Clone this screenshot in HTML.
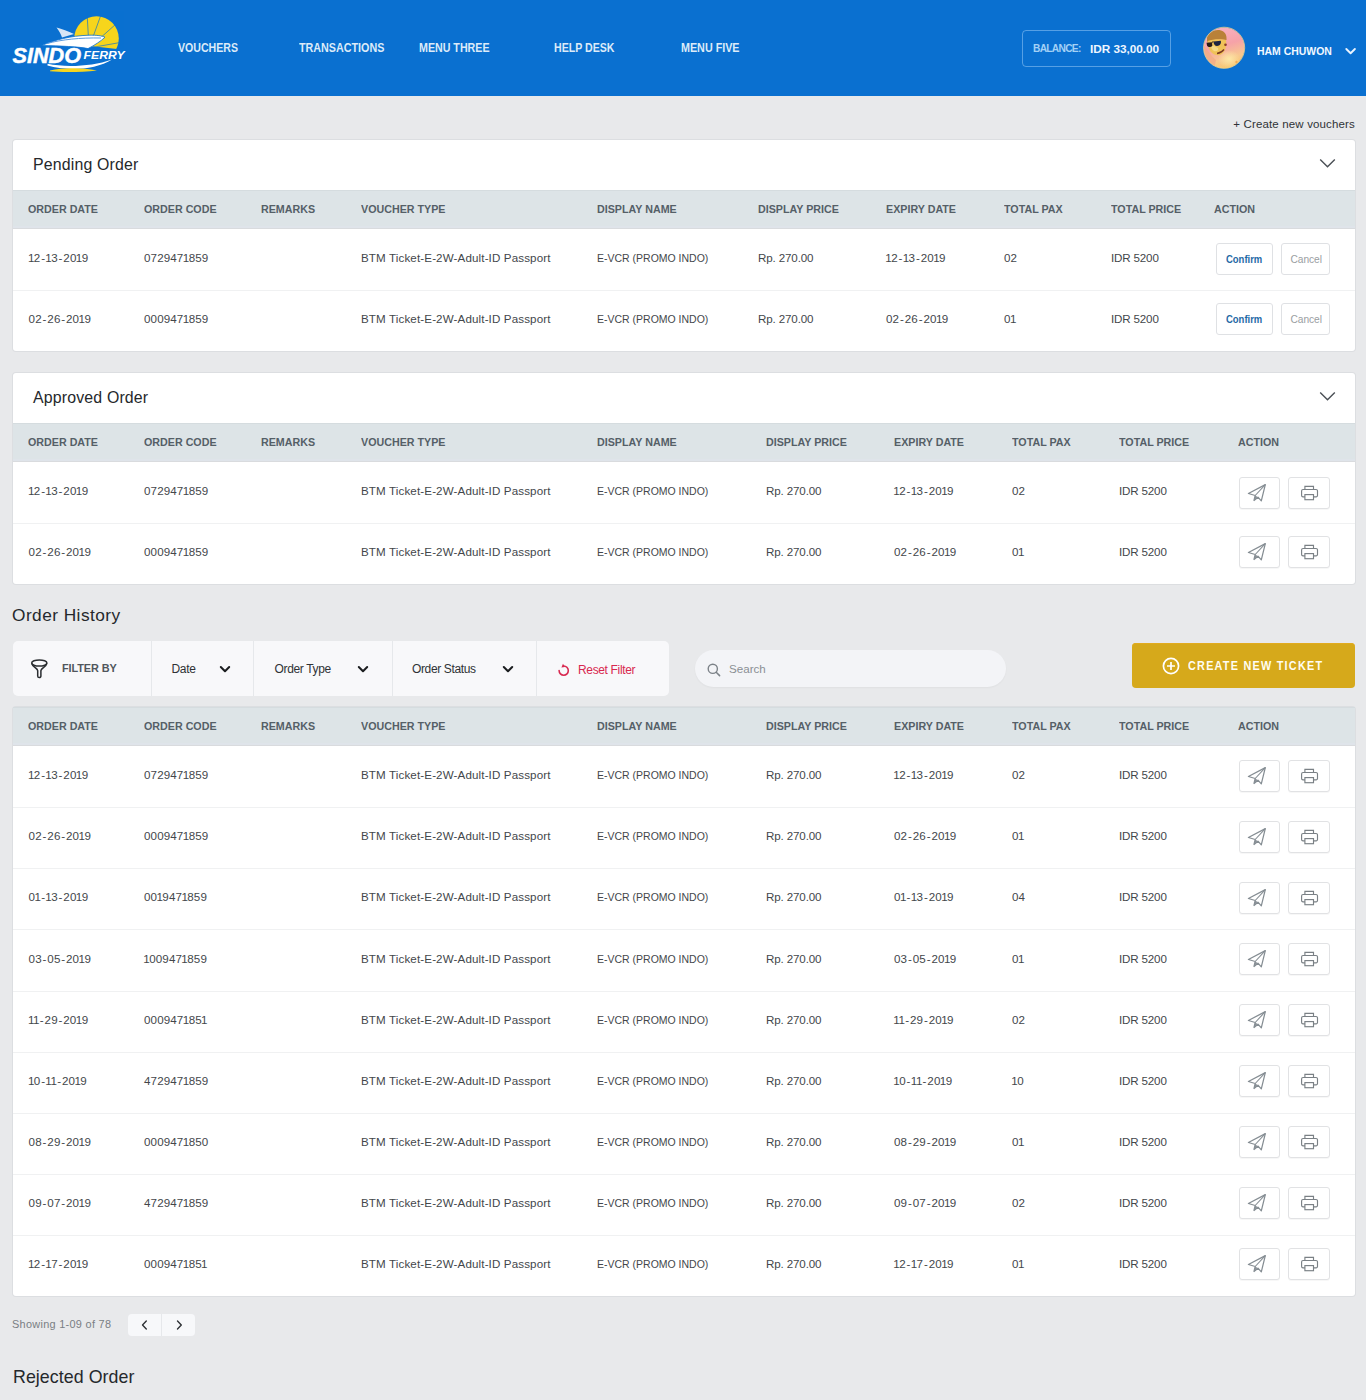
<!DOCTYPE html>
<html><head><meta charset="utf-8"><title>Sindo Ferry - Vouchers</title>
<style>
html,body{margin:0;padding:0}
body{width:1366px;height:1400px;position:relative;overflow:hidden;background:#e8e9eb;font-family:"Liberation Sans",sans-serif}
.t{position:absolute;white-space:nowrap}
.b{position:absolute;display:block}
</style></head><body>
<div class="b" style="left:0px;top:0px;width:1366px;height:96px;background:#0a70d0"></div>
<svg class="b" style="left:0px;top:0px" width="140" height="80" viewBox="0 0 140 80">
  <defs><clipPath id="sunclip"><path d="M60 10 H130 V50.5 L95 46.5 L60 44 Z"/></clipPath></defs>
  <g clip-path="url(#sunclip)">
    <circle cx="96.5" cy="38.5" r="22.3" fill="#f7d51d"/>
    <g stroke="#0a70d0" stroke-width="0.9" opacity="0.75">
      <line x1="89" y1="48" x2="87" y2="12"/><line x1="89" y1="48" x2="102" y2="12"/>
      <line x1="89" y1="48" x2="116" y2="24"/><line x1="89" y1="48" x2="123" y2="42"/>
    </g>
  </g>
  <path d="M56.5 27.5 C62 29 68 31 74 34 L62 37.5 C61 34 59 31 56.5 27.5 Z" fill="#d6e5f6"/>
  <path d="M41.5 45.6 C55 40 70 35.8 89 35.2 C97 35 102 35.8 105 37.2 C101 41 95 45 88 48.6 C80 46.8 60 45.8 41.5 45.6 Z" fill="#ffffff" stroke="#0a70d0" stroke-width="0.8"/>
  <path d="M47 43.5 C62 39.5 80 37.6 101 38" stroke="#5b9be0" stroke-width="1" fill="none"/>
  <text x="12.5" y="63.2" font-family="Liberation Sans" font-weight="700" font-style="italic" font-size="22.5" fill="#fff" stroke="#fff" stroke-width="0.5" textLength="68.5" lengthAdjust="spacingAndGlyphs">SINDO</text>
  <text x="83.6" y="59.2" font-family="Liberation Sans" font-weight="700" font-style="italic" font-size="10.6" fill="#fff" textLength="41" lengthAdjust="spacingAndGlyphs">FERRY</text>
  <path d="M47.5 63.8 C66 67.5 92 66.5 112 59.4 C96 69.5 68 71.5 47.5 65.6 Z" fill="#fff"/>
  <path d="M50 70.4 C62 67.6 82 67.4 97 70.4 C82 72.2 62 72.4 50 71.2 Z" fill="#f7d51d"/>
</svg>
<div class="t" style="left:178.2px;top:43.00px;font-size:11.9px;line-height:11.9px;font-weight:700;color:#dcebf9;letter-spacing:0px;transform:scaleX(0.89);transform-origin:0 0;">VOUCHERS</div>
<div class="t" style="left:298.7px;top:43.00px;font-size:11.9px;line-height:11.9px;font-weight:700;color:#dcebf9;letter-spacing:0px;transform:scaleX(0.904);transform-origin:0 0;">TRANSACTIONS</div>
<div class="t" style="left:419.3px;top:43.00px;font-size:11.9px;line-height:11.9px;font-weight:700;color:#dcebf9;letter-spacing:0px;transform:scaleX(0.897);transform-origin:0 0;">MENU THREE</div>
<div class="t" style="left:553.7px;top:43.00px;font-size:11.9px;line-height:11.9px;font-weight:700;color:#dcebf9;letter-spacing:0px;transform:scaleX(0.892);transform-origin:0 0;">HELP DESK</div>
<div class="t" style="left:681.1px;top:43.00px;font-size:11.9px;line-height:11.9px;font-weight:700;color:#dcebf9;letter-spacing:0px;transform:scaleX(0.904);transform-origin:0 0;">MENU FIVE</div>
<div class="b" style="left:1022px;top:30px;width:149px;height:37px;box-sizing:border-box;border:1px solid rgba(150,200,245,0.55);border-radius:4px"></div>
<div class="t" style="left:1033px;top:44.00px;font-size:10.2px;line-height:10.2px;font-weight:700;color:#a3d1f6;letter-spacing:-0.7px;">BALANCE:</div>
<div class="t" style="left:1090px;top:44.00px;font-size:11.8px;line-height:11.8px;font-weight:700;color:#eef6ff;letter-spacing:-0.05px;">IDR 33,00.00</div>
<svg class="b" style="left:1202px;top:26px" width="44" height="44" viewBox="0 0 44 44">
  <defs>
   <clipPath id="avc"><circle cx="22.1" cy="21.8" r="20.4"/></clipPath>
   <linearGradient id="avbg" x1="0.3" y1="0" x2="0.6" y2="1">
     <stop offset="0" stop-color="#f7b2c4"/><stop offset="0.45" stop-color="#f6a2a8"/><stop offset="0.75" stop-color="#f8c890"/><stop offset="1" stop-color="#f7c766"/>
   </linearGradient>
   <radialGradient id="avlight" cx="0.5" cy="0.5" r="0.5"><stop offset="0" stop-color="#fde7a6"/><stop offset="1" stop-color="#fde7a6" stop-opacity="0"/></radialGradient>
  </defs>
  <g clip-path="url(#avc)">
    <rect x="0" y="0" width="44" height="44" fill="url(#avbg)"/>
    <path d="M0 18 C5 22 8 30 14 34 L12 44 L0 44 Z" fill="#f2ab86" opacity="0.8"/>
    <ellipse cx="27" cy="33" rx="11" ry="9" fill="url(#avlight)"/>
    <path d="M5 12 C6 6 13 3 19 4.5 C23 5.5 25 9 24.5 14 C20 13 12 13 5 16 Z" fill="#b98138"/>
    <path d="M5.5 15 C11 13 19 12.5 24 14 C25 20 23 27 18 29 C13 30 9 27 7 23 C6 20 5.5 17 5.5 15 Z" fill="#f0c258"/>
    <path d="M9 19.5 C12 19 14 21 16 22 C17 24 15 26 12 25 C10 24 9 22 9 19.5 Z" fill="#f9e39a" opacity="0.7"/>
    <path d="M4.5 16.8 L10 16.2 L10.3 20 C9 21.5 6 21.5 5 19.5 Z" fill="#2b1c1a"/>
    <path d="M11.5 15.5 L18.8 14.8 C19.5 17.5 18 19.8 15 20 C13 20 11.5 18 11.5 15.5 Z" fill="#1f2440"/>
    <path d="M10 16.2 L11.5 15.8" stroke="#2b1c1a" stroke-width="1"/>
    <circle cx="23.5" cy="18.8" r="1.3" fill="#8a3b2a"/>
    <path d="M15 27.5 C18 27 20.5 25.5 22 23.5" stroke="#7a3a22" stroke-width="1.3" fill="none"/>
    <circle cx="34.5" cy="36" r="1.2" fill="#f39a3a" opacity="0.7"/>
  </g>
  <circle cx="22.1" cy="21.8" r="20.6" fill="none" stroke="#f6d88a" stroke-width="0.9" opacity="0.8"/>
</svg>
<div class="t" style="left:1257px;top:46.00px;font-size:11.45px;line-height:11.45px;font-weight:700;color:#f2f8ff;letter-spacing:0px;transform:scaleX(0.914);transform-origin:0 0;">HAM CHUWON</div>
<svg class="b" style="left:1344px;top:46px" width="13" height="10" viewBox="0 0 13 10"><path d="M2.3 3 L6.6 7.2 L10.9 3" stroke="#eaf4ff" stroke-width="1.9" fill="none" stroke-linecap="round" stroke-linejoin="round"/></svg>
<div class="t" style="right:11px;top:119.00px;font-size:11.5px;line-height:11.5px;font-weight:400;color:#2f3337;letter-spacing:0.15px;">+ Create new vouchers</div>
<div class="b" style="left:13px;top:140px;width:1342px;height:211px;background:#fff;border-radius:3px;box-shadow:0 0 0 1px #dcdee1"></div>
<div class="t" style="left:33px;top:157.00px;font-size:15.9px;line-height:15.9px;font-weight:400;color:#25282b;letter-spacing:0.16px;">Pending Order</div>
<svg class="b" style="left:1319px;top:158px" width="17" height="11" viewBox="0 0 17 11"><path d="M1.2 1.5 L8.5 8.8 L15.8 1.5" stroke="#4a4f55" stroke-width="1.4" fill="none"/></svg>
<div class="b" style="left:13px;top:190px;width:1342px;height:39px;background:#dde4e7"></div>
<div class="b" style="left:13px;top:190px;width:1342px;height:1px;background:#d5dcdf"></div>
<div class="b" style="left:13px;top:226px;width:1342px;height:2px;background:#dfe4ea"></div>
<div class="b" style="left:13px;top:228px;width:1342px;height:1px;background:#d9dbde"></div>
<div class="t" style="left:28px;top:204.00px;font-size:11.1px;line-height:11.1px;font-weight:700;color:#555f67;letter-spacing:0px;transform:scaleX(0.965);transform-origin:0 0;">ORDER DATE</div>
<div class="t" style="left:144px;top:204.00px;font-size:11.1px;line-height:11.1px;font-weight:700;color:#555f67;letter-spacing:0px;transform:scaleX(0.965);transform-origin:0 0;">ORDER CODE</div>
<div class="t" style="left:261px;top:204.00px;font-size:11.1px;line-height:11.1px;font-weight:700;color:#555f67;letter-spacing:0px;transform:scaleX(0.965);transform-origin:0 0;">REMARKS</div>
<div class="t" style="left:361px;top:204.00px;font-size:11.1px;line-height:11.1px;font-weight:700;color:#555f67;letter-spacing:0px;transform:scaleX(0.965);transform-origin:0 0;">VOUCHER TYPE</div>
<div class="t" style="left:597px;top:204.00px;font-size:11.1px;line-height:11.1px;font-weight:700;color:#555f67;letter-spacing:0px;transform:scaleX(0.965);transform-origin:0 0;">DISPLAY NAME</div>
<div class="t" style="left:758px;top:204.00px;font-size:11.1px;line-height:11.1px;font-weight:700;color:#555f67;letter-spacing:0px;transform:scaleX(0.965);transform-origin:0 0;">DISPLAY PRICE</div>
<div class="t" style="left:886px;top:204.00px;font-size:11.1px;line-height:11.1px;font-weight:700;color:#555f67;letter-spacing:0px;transform:scaleX(0.965);transform-origin:0 0;">EXPIRY DATE</div>
<div class="t" style="left:1004px;top:204.00px;font-size:11.1px;line-height:11.1px;font-weight:700;color:#555f67;letter-spacing:0px;transform:scaleX(0.965);transform-origin:0 0;">TOTAL PAX</div>
<div class="t" style="left:1111px;top:204.00px;font-size:11.1px;line-height:11.1px;font-weight:700;color:#555f67;letter-spacing:0px;transform:scaleX(0.965);transform-origin:0 0;">TOTAL PRICE</div>
<div class="t" style="left:1214px;top:204.00px;font-size:11.1px;line-height:11.1px;font-weight:700;color:#555f67;letter-spacing:0px;transform:scaleX(0.965);transform-origin:0 0;">ACTION</div>
<div class="t" style="left:28.6px;top:252.00px;font-size:11.6px;line-height:11.6px;font-weight:400;color:#43474b;letter-spacing:0.12px;"><span style="margin:0 -0.69px">1</span>2<span style="margin:0 0.81px">-</span><span style="margin:0 -0.69px">1</span>3<span style="margin:0 0.81px">-</span>20<span style="margin:0 -0.69px">1</span>9</div>
<div class="t" style="left:144px;top:252.00px;font-size:11.6px;line-height:11.6px;font-weight:400;color:#43474b;letter-spacing:0.12px;">072947<span style="margin:0 -0.69px">1</span>859</div>
<div class="t" style="left:361px;top:252.00px;font-size:11.6px;line-height:11.6px;font-weight:400;color:#43474b;letter-spacing:0.13px;">BTM Ticket-E-2W-Adult-ID Passport</div>
<div class="t" style="left:596.7px;top:252.00px;font-size:11.6px;line-height:11.6px;font-weight:400;color:#43474b;letter-spacing:0px;transform:scaleX(0.905);transform-origin:0 0;">E-VCR (PROMO INDO)</div>
<div class="t" style="left:758px;top:252.00px;font-size:11.6px;line-height:11.6px;font-weight:400;color:#43474b;letter-spacing:-0.14px;">Rp. 270.00</div>
<div class="t" style="left:886px;top:252.00px;font-size:11.6px;line-height:11.6px;font-weight:400;color:#43474b;letter-spacing:0.12px;"><span style="margin:0 -0.69px">1</span>2<span style="margin:0 0.81px">-</span><span style="margin:0 -0.69px">1</span>3<span style="margin:0 0.81px">-</span>20<span style="margin:0 -0.69px">1</span>9</div>
<div class="t" style="left:1004px;top:252.00px;font-size:11.6px;line-height:11.6px;font-weight:400;color:#43474b;letter-spacing:0.12px;">02</div>
<div class="t" style="left:1111px;top:252.00px;font-size:11.6px;line-height:11.6px;font-weight:400;color:#43474b;letter-spacing:-0.16px;">IDR 5200</div>
<div class="b" style="left:1216px;top:243.2px;width:57px;height:32px;box-sizing:border-box;border:1px solid #dfe1e4;border-radius:3px;background:#fff"></div>
<div class="b" style="left:1281px;top:243.2px;width:49px;height:32px;box-sizing:border-box;border:1px solid #dfe1e4;border-radius:3px;background:#fff"></div>
<div class="t" style="left:1226px;top:255.00px;font-size:10.4px;line-height:10.4px;font-weight:700;color:#1f6aa6;letter-spacing:0px;transform:scaleX(0.91);transform-origin:0 0;">Confirm</div>
<div class="t" style="left:1290.5px;top:255.00px;font-size:10.2px;line-height:10.2px;font-weight:400;color:#9a9ea2;letter-spacing:-0.05px;">Cancel</div>
<div class="b" style="left:13px;top:290px;width:1342px;height:1px;background:#f0f1f2"></div>
<div class="t" style="left:28.6px;top:313.00px;font-size:11.6px;line-height:11.6px;font-weight:400;color:#43474b;letter-spacing:0.12px;">02<span style="margin:0 0.81px">-</span>26<span style="margin:0 0.81px">-</span>20<span style="margin:0 -0.69px">1</span>9</div>
<div class="t" style="left:144px;top:313.00px;font-size:11.6px;line-height:11.6px;font-weight:400;color:#43474b;letter-spacing:0.12px;">000947<span style="margin:0 -0.69px">1</span>859</div>
<div class="t" style="left:361px;top:313.00px;font-size:11.6px;line-height:11.6px;font-weight:400;color:#43474b;letter-spacing:0.13px;">BTM Ticket-E-2W-Adult-ID Passport</div>
<div class="t" style="left:596.7px;top:313.00px;font-size:11.6px;line-height:11.6px;font-weight:400;color:#43474b;letter-spacing:0px;transform:scaleX(0.905);transform-origin:0 0;">E-VCR (PROMO INDO)</div>
<div class="t" style="left:758px;top:313.00px;font-size:11.6px;line-height:11.6px;font-weight:400;color:#43474b;letter-spacing:-0.14px;">Rp. 270.00</div>
<div class="t" style="left:886px;top:313.00px;font-size:11.6px;line-height:11.6px;font-weight:400;color:#43474b;letter-spacing:0.12px;">02<span style="margin:0 0.81px">-</span>26<span style="margin:0 0.81px">-</span>20<span style="margin:0 -0.69px">1</span>9</div>
<div class="t" style="left:1004px;top:313.00px;font-size:11.6px;line-height:11.6px;font-weight:400;color:#43474b;letter-spacing:0.12px;">0<span style="margin:0 -0.69px">1</span></div>
<div class="t" style="left:1111px;top:313.00px;font-size:11.6px;line-height:11.6px;font-weight:400;color:#43474b;letter-spacing:-0.16px;">IDR 5200</div>
<div class="b" style="left:1216px;top:303.2px;width:57px;height:32px;box-sizing:border-box;border:1px solid #dfe1e4;border-radius:3px;background:#fff"></div>
<div class="b" style="left:1281px;top:303.2px;width:49px;height:32px;box-sizing:border-box;border:1px solid #dfe1e4;border-radius:3px;background:#fff"></div>
<div class="t" style="left:1226px;top:315.00px;font-size:10.4px;line-height:10.4px;font-weight:700;color:#1f6aa6;letter-spacing:0px;transform:scaleX(0.91);transform-origin:0 0;">Confirm</div>
<div class="t" style="left:1290.5px;top:315.00px;font-size:10.2px;line-height:10.2px;font-weight:400;color:#9a9ea2;letter-spacing:-0.05px;">Cancel</div>
<div class="b" style="left:13px;top:373px;width:1342px;height:211px;background:#fff;border-radius:3px;box-shadow:0 0 0 1px #dcdee1"></div>
<div class="t" style="left:33px;top:390.00px;font-size:15.9px;line-height:15.9px;font-weight:400;color:#25282b;letter-spacing:0.16px;">Approved Order</div>
<svg class="b" style="left:1319px;top:391px" width="17" height="11" viewBox="0 0 17 11"><path d="M1.2 1.5 L8.5 8.8 L15.8 1.5" stroke="#4a4f55" stroke-width="1.4" fill="none"/></svg>
<div class="b" style="left:13px;top:423px;width:1342px;height:39px;background:#dde4e7"></div>
<div class="b" style="left:13px;top:423px;width:1342px;height:1px;background:#d5dcdf"></div>
<div class="b" style="left:13px;top:459px;width:1342px;height:2px;background:#dfe4ea"></div>
<div class="b" style="left:13px;top:461px;width:1342px;height:1px;background:#d9dbde"></div>
<div class="t" style="left:28px;top:437.00px;font-size:11.1px;line-height:11.1px;font-weight:700;color:#555f67;letter-spacing:0px;transform:scaleX(0.965);transform-origin:0 0;">ORDER DATE</div>
<div class="t" style="left:144px;top:437.00px;font-size:11.1px;line-height:11.1px;font-weight:700;color:#555f67;letter-spacing:0px;transform:scaleX(0.965);transform-origin:0 0;">ORDER CODE</div>
<div class="t" style="left:261px;top:437.00px;font-size:11.1px;line-height:11.1px;font-weight:700;color:#555f67;letter-spacing:0px;transform:scaleX(0.965);transform-origin:0 0;">REMARKS</div>
<div class="t" style="left:361px;top:437.00px;font-size:11.1px;line-height:11.1px;font-weight:700;color:#555f67;letter-spacing:0px;transform:scaleX(0.965);transform-origin:0 0;">VOUCHER TYPE</div>
<div class="t" style="left:597px;top:437.00px;font-size:11.1px;line-height:11.1px;font-weight:700;color:#555f67;letter-spacing:0px;transform:scaleX(0.965);transform-origin:0 0;">DISPLAY NAME</div>
<div class="t" style="left:766px;top:437.00px;font-size:11.1px;line-height:11.1px;font-weight:700;color:#555f67;letter-spacing:0px;transform:scaleX(0.965);transform-origin:0 0;">DISPLAY PRICE</div>
<div class="t" style="left:894px;top:437.00px;font-size:11.1px;line-height:11.1px;font-weight:700;color:#555f67;letter-spacing:0px;transform:scaleX(0.965);transform-origin:0 0;">EXPIRY DATE</div>
<div class="t" style="left:1012px;top:437.00px;font-size:11.1px;line-height:11.1px;font-weight:700;color:#555f67;letter-spacing:0px;transform:scaleX(0.965);transform-origin:0 0;">TOTAL PAX</div>
<div class="t" style="left:1119px;top:437.00px;font-size:11.1px;line-height:11.1px;font-weight:700;color:#555f67;letter-spacing:0px;transform:scaleX(0.965);transform-origin:0 0;">TOTAL PRICE</div>
<div class="t" style="left:1238px;top:437.00px;font-size:11.1px;line-height:11.1px;font-weight:700;color:#555f67;letter-spacing:0px;transform:scaleX(0.965);transform-origin:0 0;">ACTION</div>
<div class="t" style="left:28.6px;top:485.00px;font-size:11.6px;line-height:11.6px;font-weight:400;color:#43474b;letter-spacing:0.12px;"><span style="margin:0 -0.69px">1</span>2<span style="margin:0 0.81px">-</span><span style="margin:0 -0.69px">1</span>3<span style="margin:0 0.81px">-</span>20<span style="margin:0 -0.69px">1</span>9</div>
<div class="t" style="left:144px;top:485.00px;font-size:11.6px;line-height:11.6px;font-weight:400;color:#43474b;letter-spacing:0.12px;">072947<span style="margin:0 -0.69px">1</span>859</div>
<div class="t" style="left:361px;top:485.00px;font-size:11.6px;line-height:11.6px;font-weight:400;color:#43474b;letter-spacing:0.13px;">BTM Ticket-E-2W-Adult-ID Passport</div>
<div class="t" style="left:596.7px;top:485.00px;font-size:11.6px;line-height:11.6px;font-weight:400;color:#43474b;letter-spacing:0px;transform:scaleX(0.905);transform-origin:0 0;">E-VCR (PROMO INDO)</div>
<div class="t" style="left:766px;top:485.00px;font-size:11.6px;line-height:11.6px;font-weight:400;color:#43474b;letter-spacing:-0.14px;">Rp. 270.00</div>
<div class="t" style="left:894px;top:485.00px;font-size:11.6px;line-height:11.6px;font-weight:400;color:#43474b;letter-spacing:0.12px;"><span style="margin:0 -0.69px">1</span>2<span style="margin:0 0.81px">-</span><span style="margin:0 -0.69px">1</span>3<span style="margin:0 0.81px">-</span>20<span style="margin:0 -0.69px">1</span>9</div>
<div class="t" style="left:1012px;top:485.00px;font-size:11.6px;line-height:11.6px;font-weight:400;color:#43474b;letter-spacing:0.12px;">02</div>
<div class="t" style="left:1119px;top:485.00px;font-size:11.6px;line-height:11.6px;font-weight:400;color:#43474b;letter-spacing:-0.16px;">IDR 5200</div>
<div class="b" style="left:1239px;top:476.6px;width:41px;height:32px;box-sizing:border-box;border:1px solid #e1e2e4;border-radius:3px;background:#fff;box-shadow:0 1px 0 rgba(0,0,0,0.03)"></div>
<div class="b" style="left:1288px;top:476.6px;width:42px;height:32px;box-sizing:border-box;border:1px solid #e1e2e4;border-radius:3px;background:#fff;box-shadow:0 1px 0 rgba(0,0,0,0.03)"></div>
<svg class="b" style="left:1239px;top:476.6px" width="41" height="32" viewBox="0 0 41 32"><path d="M26.3 7.6 L9.4 16.5 L16.2 18.5 L15 23.5 L19 20.2 L22.3 23.8 Z" stroke="#858d93" stroke-width="1.25" fill="none" stroke-linejoin="round"/><path d="M26.3 7.6 L16.2 18.5" stroke="#858d93" stroke-width="1.1"/><path d="M16.2 18.5 L15 23.5 L18.6 20 Z" fill="#8a9197"/></svg>
<svg class="b" style="left:1288px;top:476.6px" width="42" height="32" viewBox="0 0 42 32"><path d="M16.9 12.5 V9.3 H25.5 V12.5" stroke="#7a8085" stroke-width="1.15" fill="none"/><path d="M16.9 19.8 H15 A1.4 1.4 0 0 1 13.6 18.4 V13.9 A1.4 1.4 0 0 1 15 12.5 H28.1 A1.4 1.4 0 0 1 29.5 13.9 V18.4 A1.4 1.4 0 0 1 28.1 19.8 H25.5" stroke="#7a8085" stroke-width="1.15" fill="none"/><rect x="16.9" y="17.6" width="8.6" height="5.1" stroke="#7a8085" stroke-width="1.15" fill="none"/></svg>
<div class="b" style="left:13px;top:523px;width:1342px;height:1px;background:#f0f1f2"></div>
<div class="t" style="left:28.6px;top:546.00px;font-size:11.6px;line-height:11.6px;font-weight:400;color:#43474b;letter-spacing:0.12px;">02<span style="margin:0 0.81px">-</span>26<span style="margin:0 0.81px">-</span>20<span style="margin:0 -0.69px">1</span>9</div>
<div class="t" style="left:144px;top:546.00px;font-size:11.6px;line-height:11.6px;font-weight:400;color:#43474b;letter-spacing:0.12px;">000947<span style="margin:0 -0.69px">1</span>859</div>
<div class="t" style="left:361px;top:546.00px;font-size:11.6px;line-height:11.6px;font-weight:400;color:#43474b;letter-spacing:0.13px;">BTM Ticket-E-2W-Adult-ID Passport</div>
<div class="t" style="left:596.7px;top:546.00px;font-size:11.6px;line-height:11.6px;font-weight:400;color:#43474b;letter-spacing:0px;transform:scaleX(0.905);transform-origin:0 0;">E-VCR (PROMO INDO)</div>
<div class="t" style="left:766px;top:546.00px;font-size:11.6px;line-height:11.6px;font-weight:400;color:#43474b;letter-spacing:-0.14px;">Rp. 270.00</div>
<div class="t" style="left:894px;top:546.00px;font-size:11.6px;line-height:11.6px;font-weight:400;color:#43474b;letter-spacing:0.12px;">02<span style="margin:0 0.81px">-</span>26<span style="margin:0 0.81px">-</span>20<span style="margin:0 -0.69px">1</span>9</div>
<div class="t" style="left:1012px;top:546.00px;font-size:11.6px;line-height:11.6px;font-weight:400;color:#43474b;letter-spacing:0.12px;">0<span style="margin:0 -0.69px">1</span></div>
<div class="t" style="left:1119px;top:546.00px;font-size:11.6px;line-height:11.6px;font-weight:400;color:#43474b;letter-spacing:-0.16px;">IDR 5200</div>
<div class="b" style="left:1239px;top:535.6px;width:41px;height:32px;box-sizing:border-box;border:1px solid #e1e2e4;border-radius:3px;background:#fff;box-shadow:0 1px 0 rgba(0,0,0,0.03)"></div>
<div class="b" style="left:1288px;top:535.6px;width:42px;height:32px;box-sizing:border-box;border:1px solid #e1e2e4;border-radius:3px;background:#fff;box-shadow:0 1px 0 rgba(0,0,0,0.03)"></div>
<svg class="b" style="left:1239px;top:535.6px" width="41" height="32" viewBox="0 0 41 32"><path d="M26.3 7.6 L9.4 16.5 L16.2 18.5 L15 23.5 L19 20.2 L22.3 23.8 Z" stroke="#858d93" stroke-width="1.25" fill="none" stroke-linejoin="round"/><path d="M26.3 7.6 L16.2 18.5" stroke="#858d93" stroke-width="1.1"/><path d="M16.2 18.5 L15 23.5 L18.6 20 Z" fill="#8a9197"/></svg>
<svg class="b" style="left:1288px;top:535.6px" width="42" height="32" viewBox="0 0 42 32"><path d="M16.9 12.5 V9.3 H25.5 V12.5" stroke="#7a8085" stroke-width="1.15" fill="none"/><path d="M16.9 19.8 H15 A1.4 1.4 0 0 1 13.6 18.4 V13.9 A1.4 1.4 0 0 1 15 12.5 H28.1 A1.4 1.4 0 0 1 29.5 13.9 V18.4 A1.4 1.4 0 0 1 28.1 19.8 H25.5" stroke="#7a8085" stroke-width="1.15" fill="none"/><rect x="16.9" y="17.6" width="8.6" height="5.1" stroke="#7a8085" stroke-width="1.15" fill="none"/></svg>
<div class="t" style="left:12px;top:607.00px;font-size:17.3px;line-height:17.3px;font-weight:400;color:#25282b;letter-spacing:0.45px;">Order History</div>
<div class="b" style="left:13px;top:641px;width:656px;height:55px;background:#f8f8fa;border-radius:5px"></div>
<div class="b" style="left:151px;top:641px;width:1px;height:55px;background:#e6e8eb"></div>
<div class="b" style="left:253px;top:641px;width:1px;height:55px;background:#e6e8eb"></div>
<div class="b" style="left:392px;top:641px;width:1px;height:55px;background:#e6e8eb"></div>
<div class="b" style="left:536px;top:641px;width:1px;height:55px;background:#e6e8eb"></div>
<svg class="b" style="left:29px;top:658px" width="21" height="22" viewBox="0 0 21 22"><ellipse cx="10.3" cy="5.0" rx="7.6" ry="3.1" stroke="#2a2d30" stroke-width="1.5" fill="none"/><path d="M2.7 5.4 C3.4 9 8.4 10.2 8.7 12.6 V18 A1.6 1.6 0 0 0 11.9 18 V12.6 C12.2 10.2 17.2 9 17.9 5.4" stroke="#2a2d30" stroke-width="1.5" fill="none" stroke-linejoin="round"/></svg>
<div class="t" style="left:62px;top:663.00px;font-size:10.9px;line-height:10.9px;font-weight:700;color:#50565c;letter-spacing:-0.1px;">FILTER BY</div>
<div class="t" style="left:171.5px;top:663.00px;font-size:12px;line-height:12px;font-weight:400;color:#2f3235;letter-spacing:-0.3px;">Date</div>
<svg class="b" style="left:219px;top:665px" width="12" height="9" viewBox="0 0 12 9"><path d="M1.8 2 L6 6.3 L10.2 2" stroke="#1b1d1f" stroke-width="2" fill="none" stroke-linecap="round" stroke-linejoin="round"/></svg>
<div class="t" style="left:274.5px;top:663.00px;font-size:12px;line-height:12px;font-weight:400;color:#2f3235;letter-spacing:-0.35px;">Order Type</div>
<svg class="b" style="left:356.5px;top:665px" width="12" height="9" viewBox="0 0 12 9"><path d="M1.8 2 L6 6.3 L10.2 2" stroke="#1b1d1f" stroke-width="2" fill="none" stroke-linecap="round" stroke-linejoin="round"/></svg>
<div class="t" style="left:412px;top:663.00px;font-size:12px;line-height:12px;font-weight:400;color:#2f3235;letter-spacing:-0.37px;">Order Status</div>
<svg class="b" style="left:502px;top:665px" width="12" height="9" viewBox="0 0 12 9"><path d="M1.8 2 L6 6.3 L10.2 2" stroke="#1b1d1f" stroke-width="2" fill="none" stroke-linecap="round" stroke-linejoin="round"/></svg>
<svg class="b" style="left:556px;top:662px" width="15" height="16" viewBox="0 0 15 16"><path d="M3.1 8.6 A4.6 4.6 0 1 0 7.6 4.0" stroke="#d8284f" stroke-width="1.6" fill="none" stroke-linecap="round"/><path d="M7.0 1.7 L5.4 5.4 L8.9 5.0 Z" fill="#d8284f"/></svg>
<div class="t" style="left:578px;top:664.00px;font-size:12px;line-height:12px;font-weight:400;color:#d8284f;letter-spacing:-0.35px;">Reset Filter</div>
<div class="b" style="left:695px;top:650px;width:311px;height:37px;background:#f3f4f7;border-radius:19px;box-shadow:0 1px 2px rgba(0,0,0,0.04)"></div>
<svg class="b" style="left:707px;top:663px" width="14" height="14" viewBox="0 0 14 14"><circle cx="5.8" cy="5.8" r="4.6" stroke="#7c8288" stroke-width="1.4" fill="none"/><path d="M9.2 9.2 L12.6 12.6" stroke="#7c8288" stroke-width="1.5" stroke-linecap="round"/></svg>
<div class="t" style="left:729px;top:663.00px;font-size:11.6px;line-height:11.6px;font-weight:400;color:#8a8f94;letter-spacing:0px;">Search</div>
<div class="b" style="left:1132px;top:643px;width:223px;height:45px;background:#d6a91b;border-radius:4px;box-shadow:inset 0 1px 0 #e2ab1e"></div>
<svg class="b" style="left:1162px;top:656.5px" width="18" height="18" viewBox="0 0 18 18"><circle cx="9" cy="9" r="7.6" stroke="#fff" stroke-width="1.7" fill="none"/><path d="M9 5 V13 M5 9 H13" stroke="#fff" stroke-width="1.7"/></svg>
<div class="t" style="left:1187.5px;top:660.00px;font-size:12.6px;line-height:12.6px;font-weight:700;color:#fffdf2;letter-spacing:1.45px;transform:scaleX(0.86);transform-origin:0 0;">CREATE NEW TICKET</div>
<div class="b" style="left:13px;top:707px;width:1342px;height:589px;background:#fff;border-radius:3px;box-shadow:0 0 0 1px #dcdee1"></div>
<div class="b" style="left:13px;top:707px;width:1342px;height:39px;background:#dde4e7"></div>
<div class="b" style="left:13px;top:707px;width:1342px;height:1px;background:#d5dcdf"></div>
<div class="b" style="left:13px;top:743px;width:1342px;height:2px;background:#dfe4ea"></div>
<div class="b" style="left:13px;top:745px;width:1342px;height:1px;background:#d9dbde"></div>
<div class="t" style="left:28px;top:721.00px;font-size:11.1px;line-height:11.1px;font-weight:700;color:#555f67;letter-spacing:0px;transform:scaleX(0.965);transform-origin:0 0;">ORDER DATE</div>
<div class="t" style="left:144px;top:721.00px;font-size:11.1px;line-height:11.1px;font-weight:700;color:#555f67;letter-spacing:0px;transform:scaleX(0.965);transform-origin:0 0;">ORDER CODE</div>
<div class="t" style="left:261px;top:721.00px;font-size:11.1px;line-height:11.1px;font-weight:700;color:#555f67;letter-spacing:0px;transform:scaleX(0.965);transform-origin:0 0;">REMARKS</div>
<div class="t" style="left:361px;top:721.00px;font-size:11.1px;line-height:11.1px;font-weight:700;color:#555f67;letter-spacing:0px;transform:scaleX(0.965);transform-origin:0 0;">VOUCHER TYPE</div>
<div class="t" style="left:597px;top:721.00px;font-size:11.1px;line-height:11.1px;font-weight:700;color:#555f67;letter-spacing:0px;transform:scaleX(0.965);transform-origin:0 0;">DISPLAY NAME</div>
<div class="t" style="left:766px;top:721.00px;font-size:11.1px;line-height:11.1px;font-weight:700;color:#555f67;letter-spacing:0px;transform:scaleX(0.965);transform-origin:0 0;">DISPLAY PRICE</div>
<div class="t" style="left:894px;top:721.00px;font-size:11.1px;line-height:11.1px;font-weight:700;color:#555f67;letter-spacing:0px;transform:scaleX(0.965);transform-origin:0 0;">EXPIRY DATE</div>
<div class="t" style="left:1012px;top:721.00px;font-size:11.1px;line-height:11.1px;font-weight:700;color:#555f67;letter-spacing:0px;transform:scaleX(0.965);transform-origin:0 0;">TOTAL PAX</div>
<div class="t" style="left:1119px;top:721.00px;font-size:11.1px;line-height:11.1px;font-weight:700;color:#555f67;letter-spacing:0px;transform:scaleX(0.965);transform-origin:0 0;">TOTAL PRICE</div>
<div class="t" style="left:1238px;top:721.00px;font-size:11.1px;line-height:11.1px;font-weight:700;color:#555f67;letter-spacing:0px;transform:scaleX(0.965);transform-origin:0 0;">ACTION</div>
<div class="t" style="left:28.6px;top:769.00px;font-size:11.6px;line-height:11.6px;font-weight:400;color:#43474b;letter-spacing:0.12px;"><span style="margin:0 -0.69px">1</span>2<span style="margin:0 0.81px">-</span><span style="margin:0 -0.69px">1</span>3<span style="margin:0 0.81px">-</span>20<span style="margin:0 -0.69px">1</span>9</div>
<div class="t" style="left:144px;top:769.00px;font-size:11.6px;line-height:11.6px;font-weight:400;color:#43474b;letter-spacing:0.12px;">072947<span style="margin:0 -0.69px">1</span>859</div>
<div class="t" style="left:361px;top:769.00px;font-size:11.6px;line-height:11.6px;font-weight:400;color:#43474b;letter-spacing:0.13px;">BTM Ticket-E-2W-Adult-ID Passport</div>
<div class="t" style="left:596.7px;top:769.00px;font-size:11.6px;line-height:11.6px;font-weight:400;color:#43474b;letter-spacing:0px;transform:scaleX(0.905);transform-origin:0 0;">E-VCR (PROMO INDO)</div>
<div class="t" style="left:766px;top:769.00px;font-size:11.6px;line-height:11.6px;font-weight:400;color:#43474b;letter-spacing:-0.14px;">Rp. 270.00</div>
<div class="t" style="left:894px;top:769.00px;font-size:11.6px;line-height:11.6px;font-weight:400;color:#43474b;letter-spacing:0.12px;"><span style="margin:0 -0.69px">1</span>2<span style="margin:0 0.81px">-</span><span style="margin:0 -0.69px">1</span>3<span style="margin:0 0.81px">-</span>20<span style="margin:0 -0.69px">1</span>9</div>
<div class="t" style="left:1012px;top:769.00px;font-size:11.6px;line-height:11.6px;font-weight:400;color:#43474b;letter-spacing:0.12px;">02</div>
<div class="t" style="left:1119px;top:769.00px;font-size:11.6px;line-height:11.6px;font-weight:400;color:#43474b;letter-spacing:-0.16px;">IDR 5200</div>
<div class="b" style="left:1239px;top:760.4px;width:41px;height:32px;box-sizing:border-box;border:1px solid #e1e2e4;border-radius:3px;background:#fff;box-shadow:0 1px 0 rgba(0,0,0,0.03)"></div>
<div class="b" style="left:1288px;top:760.4px;width:42px;height:32px;box-sizing:border-box;border:1px solid #e1e2e4;border-radius:3px;background:#fff;box-shadow:0 1px 0 rgba(0,0,0,0.03)"></div>
<svg class="b" style="left:1239px;top:760.4px" width="41" height="32" viewBox="0 0 41 32"><path d="M26.3 7.6 L9.4 16.5 L16.2 18.5 L15 23.5 L19 20.2 L22.3 23.8 Z" stroke="#858d93" stroke-width="1.25" fill="none" stroke-linejoin="round"/><path d="M26.3 7.6 L16.2 18.5" stroke="#858d93" stroke-width="1.1"/><path d="M16.2 18.5 L15 23.5 L18.6 20 Z" fill="#8a9197"/></svg>
<svg class="b" style="left:1288px;top:760.4px" width="42" height="32" viewBox="0 0 42 32"><path d="M16.9 12.5 V9.3 H25.5 V12.5" stroke="#7a8085" stroke-width="1.15" fill="none"/><path d="M16.9 19.8 H15 A1.4 1.4 0 0 1 13.6 18.4 V13.9 A1.4 1.4 0 0 1 15 12.5 H28.1 A1.4 1.4 0 0 1 29.5 13.9 V18.4 A1.4 1.4 0 0 1 28.1 19.8 H25.5" stroke="#7a8085" stroke-width="1.15" fill="none"/><rect x="16.9" y="17.6" width="8.6" height="5.1" stroke="#7a8085" stroke-width="1.15" fill="none"/></svg>
<div class="b" style="left:13px;top:807px;width:1342px;height:1px;background:#f0f1f2"></div>
<div class="t" style="left:28.6px;top:830.00px;font-size:11.6px;line-height:11.6px;font-weight:400;color:#43474b;letter-spacing:0.12px;">02<span style="margin:0 0.81px">-</span>26<span style="margin:0 0.81px">-</span>20<span style="margin:0 -0.69px">1</span>9</div>
<div class="t" style="left:144px;top:830.00px;font-size:11.6px;line-height:11.6px;font-weight:400;color:#43474b;letter-spacing:0.12px;">000947<span style="margin:0 -0.69px">1</span>859</div>
<div class="t" style="left:361px;top:830.00px;font-size:11.6px;line-height:11.6px;font-weight:400;color:#43474b;letter-spacing:0.13px;">BTM Ticket-E-2W-Adult-ID Passport</div>
<div class="t" style="left:596.7px;top:830.00px;font-size:11.6px;line-height:11.6px;font-weight:400;color:#43474b;letter-spacing:0px;transform:scaleX(0.905);transform-origin:0 0;">E-VCR (PROMO INDO)</div>
<div class="t" style="left:766px;top:830.00px;font-size:11.6px;line-height:11.6px;font-weight:400;color:#43474b;letter-spacing:-0.14px;">Rp. 270.00</div>
<div class="t" style="left:894px;top:830.00px;font-size:11.6px;line-height:11.6px;font-weight:400;color:#43474b;letter-spacing:0.12px;">02<span style="margin:0 0.81px">-</span>26<span style="margin:0 0.81px">-</span>20<span style="margin:0 -0.69px">1</span>9</div>
<div class="t" style="left:1012px;top:830.00px;font-size:11.6px;line-height:11.6px;font-weight:400;color:#43474b;letter-spacing:0.12px;">0<span style="margin:0 -0.69px">1</span></div>
<div class="t" style="left:1119px;top:830.00px;font-size:11.6px;line-height:11.6px;font-weight:400;color:#43474b;letter-spacing:-0.16px;">IDR 5200</div>
<div class="b" style="left:1239px;top:821.4px;width:41px;height:32px;box-sizing:border-box;border:1px solid #e1e2e4;border-radius:3px;background:#fff;box-shadow:0 1px 0 rgba(0,0,0,0.03)"></div>
<div class="b" style="left:1288px;top:821.4px;width:42px;height:32px;box-sizing:border-box;border:1px solid #e1e2e4;border-radius:3px;background:#fff;box-shadow:0 1px 0 rgba(0,0,0,0.03)"></div>
<svg class="b" style="left:1239px;top:821.4px" width="41" height="32" viewBox="0 0 41 32"><path d="M26.3 7.6 L9.4 16.5 L16.2 18.5 L15 23.5 L19 20.2 L22.3 23.8 Z" stroke="#858d93" stroke-width="1.25" fill="none" stroke-linejoin="round"/><path d="M26.3 7.6 L16.2 18.5" stroke="#858d93" stroke-width="1.1"/><path d="M16.2 18.5 L15 23.5 L18.6 20 Z" fill="#8a9197"/></svg>
<svg class="b" style="left:1288px;top:821.4px" width="42" height="32" viewBox="0 0 42 32"><path d="M16.9 12.5 V9.3 H25.5 V12.5" stroke="#7a8085" stroke-width="1.15" fill="none"/><path d="M16.9 19.8 H15 A1.4 1.4 0 0 1 13.6 18.4 V13.9 A1.4 1.4 0 0 1 15 12.5 H28.1 A1.4 1.4 0 0 1 29.5 13.9 V18.4 A1.4 1.4 0 0 1 28.1 19.8 H25.5" stroke="#7a8085" stroke-width="1.15" fill="none"/><rect x="16.9" y="17.6" width="8.6" height="5.1" stroke="#7a8085" stroke-width="1.15" fill="none"/></svg>
<div class="b" style="left:13px;top:868px;width:1342px;height:1px;background:#f0f1f2"></div>
<div class="t" style="left:28.6px;top:891.00px;font-size:11.6px;line-height:11.6px;font-weight:400;color:#43474b;letter-spacing:0.12px;">0<span style="margin:0 -0.69px">1</span><span style="margin:0 0.81px">-</span><span style="margin:0 -0.69px">1</span>3<span style="margin:0 0.81px">-</span>20<span style="margin:0 -0.69px">1</span>9</div>
<div class="t" style="left:144px;top:891.00px;font-size:11.6px;line-height:11.6px;font-weight:400;color:#43474b;letter-spacing:0.12px;">00<span style="margin:0 -0.69px">1</span>947<span style="margin:0 -0.69px">1</span>859</div>
<div class="t" style="left:361px;top:891.00px;font-size:11.6px;line-height:11.6px;font-weight:400;color:#43474b;letter-spacing:0.13px;">BTM Ticket-E-2W-Adult-ID Passport</div>
<div class="t" style="left:596.7px;top:891.00px;font-size:11.6px;line-height:11.6px;font-weight:400;color:#43474b;letter-spacing:0px;transform:scaleX(0.905);transform-origin:0 0;">E-VCR (PROMO INDO)</div>
<div class="t" style="left:766px;top:891.00px;font-size:11.6px;line-height:11.6px;font-weight:400;color:#43474b;letter-spacing:-0.14px;">Rp. 270.00</div>
<div class="t" style="left:894px;top:891.00px;font-size:11.6px;line-height:11.6px;font-weight:400;color:#43474b;letter-spacing:0.12px;">0<span style="margin:0 -0.69px">1</span><span style="margin:0 0.81px">-</span><span style="margin:0 -0.69px">1</span>3<span style="margin:0 0.81px">-</span>20<span style="margin:0 -0.69px">1</span>9</div>
<div class="t" style="left:1012px;top:891.00px;font-size:11.6px;line-height:11.6px;font-weight:400;color:#43474b;letter-spacing:0.12px;">04</div>
<div class="t" style="left:1119px;top:891.00px;font-size:11.6px;line-height:11.6px;font-weight:400;color:#43474b;letter-spacing:-0.16px;">IDR 5200</div>
<div class="b" style="left:1239px;top:882.4px;width:41px;height:32px;box-sizing:border-box;border:1px solid #e1e2e4;border-radius:3px;background:#fff;box-shadow:0 1px 0 rgba(0,0,0,0.03)"></div>
<div class="b" style="left:1288px;top:882.4px;width:42px;height:32px;box-sizing:border-box;border:1px solid #e1e2e4;border-radius:3px;background:#fff;box-shadow:0 1px 0 rgba(0,0,0,0.03)"></div>
<svg class="b" style="left:1239px;top:882.4px" width="41" height="32" viewBox="0 0 41 32"><path d="M26.3 7.6 L9.4 16.5 L16.2 18.5 L15 23.5 L19 20.2 L22.3 23.8 Z" stroke="#858d93" stroke-width="1.25" fill="none" stroke-linejoin="round"/><path d="M26.3 7.6 L16.2 18.5" stroke="#858d93" stroke-width="1.1"/><path d="M16.2 18.5 L15 23.5 L18.6 20 Z" fill="#8a9197"/></svg>
<svg class="b" style="left:1288px;top:882.4px" width="42" height="32" viewBox="0 0 42 32"><path d="M16.9 12.5 V9.3 H25.5 V12.5" stroke="#7a8085" stroke-width="1.15" fill="none"/><path d="M16.9 19.8 H15 A1.4 1.4 0 0 1 13.6 18.4 V13.9 A1.4 1.4 0 0 1 15 12.5 H28.1 A1.4 1.4 0 0 1 29.5 13.9 V18.4 A1.4 1.4 0 0 1 28.1 19.8 H25.5" stroke="#7a8085" stroke-width="1.15" fill="none"/><rect x="16.9" y="17.6" width="8.6" height="5.1" stroke="#7a8085" stroke-width="1.15" fill="none"/></svg>
<div class="b" style="left:13px;top:929px;width:1342px;height:1px;background:#f0f1f2"></div>
<div class="t" style="left:28.6px;top:953.00px;font-size:11.6px;line-height:11.6px;font-weight:400;color:#43474b;letter-spacing:0.12px;">03<span style="margin:0 0.81px">-</span>05<span style="margin:0 0.81px">-</span>20<span style="margin:0 -0.69px">1</span>9</div>
<div class="t" style="left:144px;top:953.00px;font-size:11.6px;line-height:11.6px;font-weight:400;color:#43474b;letter-spacing:0.12px;"><span style="margin:0 -0.69px">1</span>00947<span style="margin:0 -0.69px">1</span>859</div>
<div class="t" style="left:361px;top:953.00px;font-size:11.6px;line-height:11.6px;font-weight:400;color:#43474b;letter-spacing:0.13px;">BTM Ticket-E-2W-Adult-ID Passport</div>
<div class="t" style="left:596.7px;top:953.00px;font-size:11.6px;line-height:11.6px;font-weight:400;color:#43474b;letter-spacing:0px;transform:scaleX(0.905);transform-origin:0 0;">E-VCR (PROMO INDO)</div>
<div class="t" style="left:766px;top:953.00px;font-size:11.6px;line-height:11.6px;font-weight:400;color:#43474b;letter-spacing:-0.14px;">Rp. 270.00</div>
<div class="t" style="left:894px;top:953.00px;font-size:11.6px;line-height:11.6px;font-weight:400;color:#43474b;letter-spacing:0.12px;">03<span style="margin:0 0.81px">-</span>05<span style="margin:0 0.81px">-</span>20<span style="margin:0 -0.69px">1</span>9</div>
<div class="t" style="left:1012px;top:953.00px;font-size:11.6px;line-height:11.6px;font-weight:400;color:#43474b;letter-spacing:0.12px;">0<span style="margin:0 -0.69px">1</span></div>
<div class="t" style="left:1119px;top:953.00px;font-size:11.6px;line-height:11.6px;font-weight:400;color:#43474b;letter-spacing:-0.16px;">IDR 5200</div>
<div class="b" style="left:1239px;top:943.4px;width:41px;height:32px;box-sizing:border-box;border:1px solid #e1e2e4;border-radius:3px;background:#fff;box-shadow:0 1px 0 rgba(0,0,0,0.03)"></div>
<div class="b" style="left:1288px;top:943.4px;width:42px;height:32px;box-sizing:border-box;border:1px solid #e1e2e4;border-radius:3px;background:#fff;box-shadow:0 1px 0 rgba(0,0,0,0.03)"></div>
<svg class="b" style="left:1239px;top:943.4px" width="41" height="32" viewBox="0 0 41 32"><path d="M26.3 7.6 L9.4 16.5 L16.2 18.5 L15 23.5 L19 20.2 L22.3 23.8 Z" stroke="#858d93" stroke-width="1.25" fill="none" stroke-linejoin="round"/><path d="M26.3 7.6 L16.2 18.5" stroke="#858d93" stroke-width="1.1"/><path d="M16.2 18.5 L15 23.5 L18.6 20 Z" fill="#8a9197"/></svg>
<svg class="b" style="left:1288px;top:943.4px" width="42" height="32" viewBox="0 0 42 32"><path d="M16.9 12.5 V9.3 H25.5 V12.5" stroke="#7a8085" stroke-width="1.15" fill="none"/><path d="M16.9 19.8 H15 A1.4 1.4 0 0 1 13.6 18.4 V13.9 A1.4 1.4 0 0 1 15 12.5 H28.1 A1.4 1.4 0 0 1 29.5 13.9 V18.4 A1.4 1.4 0 0 1 28.1 19.8 H25.5" stroke="#7a8085" stroke-width="1.15" fill="none"/><rect x="16.9" y="17.6" width="8.6" height="5.1" stroke="#7a8085" stroke-width="1.15" fill="none"/></svg>
<div class="b" style="left:13px;top:991px;width:1342px;height:1px;background:#f0f1f2"></div>
<div class="t" style="left:28.6px;top:1014.00px;font-size:11.6px;line-height:11.6px;font-weight:400;color:#43474b;letter-spacing:0.12px;"><span style="margin:0 -0.69px">1</span><span style="margin:0 -0.69px">1</span><span style="margin:0 0.81px">-</span>29<span style="margin:0 0.81px">-</span>20<span style="margin:0 -0.69px">1</span>9</div>
<div class="t" style="left:144px;top:1014.00px;font-size:11.6px;line-height:11.6px;font-weight:400;color:#43474b;letter-spacing:0.12px;">000947<span style="margin:0 -0.69px">1</span>85<span style="margin:0 -0.69px">1</span></div>
<div class="t" style="left:361px;top:1014.00px;font-size:11.6px;line-height:11.6px;font-weight:400;color:#43474b;letter-spacing:0.13px;">BTM Ticket-E-2W-Adult-ID Passport</div>
<div class="t" style="left:596.7px;top:1014.00px;font-size:11.6px;line-height:11.6px;font-weight:400;color:#43474b;letter-spacing:0px;transform:scaleX(0.905);transform-origin:0 0;">E-VCR (PROMO INDO)</div>
<div class="t" style="left:766px;top:1014.00px;font-size:11.6px;line-height:11.6px;font-weight:400;color:#43474b;letter-spacing:-0.14px;">Rp. 270.00</div>
<div class="t" style="left:894px;top:1014.00px;font-size:11.6px;line-height:11.6px;font-weight:400;color:#43474b;letter-spacing:0.12px;"><span style="margin:0 -0.69px">1</span><span style="margin:0 -0.69px">1</span><span style="margin:0 0.81px">-</span>29<span style="margin:0 0.81px">-</span>20<span style="margin:0 -0.69px">1</span>9</div>
<div class="t" style="left:1012px;top:1014.00px;font-size:11.6px;line-height:11.6px;font-weight:400;color:#43474b;letter-spacing:0.12px;">02</div>
<div class="t" style="left:1119px;top:1014.00px;font-size:11.6px;line-height:11.6px;font-weight:400;color:#43474b;letter-spacing:-0.16px;">IDR 5200</div>
<div class="b" style="left:1239px;top:1004.4px;width:41px;height:32px;box-sizing:border-box;border:1px solid #e1e2e4;border-radius:3px;background:#fff;box-shadow:0 1px 0 rgba(0,0,0,0.03)"></div>
<div class="b" style="left:1288px;top:1004.4px;width:42px;height:32px;box-sizing:border-box;border:1px solid #e1e2e4;border-radius:3px;background:#fff;box-shadow:0 1px 0 rgba(0,0,0,0.03)"></div>
<svg class="b" style="left:1239px;top:1004.4px" width="41" height="32" viewBox="0 0 41 32"><path d="M26.3 7.6 L9.4 16.5 L16.2 18.5 L15 23.5 L19 20.2 L22.3 23.8 Z" stroke="#858d93" stroke-width="1.25" fill="none" stroke-linejoin="round"/><path d="M26.3 7.6 L16.2 18.5" stroke="#858d93" stroke-width="1.1"/><path d="M16.2 18.5 L15 23.5 L18.6 20 Z" fill="#8a9197"/></svg>
<svg class="b" style="left:1288px;top:1004.4px" width="42" height="32" viewBox="0 0 42 32"><path d="M16.9 12.5 V9.3 H25.5 V12.5" stroke="#7a8085" stroke-width="1.15" fill="none"/><path d="M16.9 19.8 H15 A1.4 1.4 0 0 1 13.6 18.4 V13.9 A1.4 1.4 0 0 1 15 12.5 H28.1 A1.4 1.4 0 0 1 29.5 13.9 V18.4 A1.4 1.4 0 0 1 28.1 19.8 H25.5" stroke="#7a8085" stroke-width="1.15" fill="none"/><rect x="16.9" y="17.6" width="8.6" height="5.1" stroke="#7a8085" stroke-width="1.15" fill="none"/></svg>
<div class="b" style="left:13px;top:1052px;width:1342px;height:1px;background:#f0f1f2"></div>
<div class="t" style="left:28.6px;top:1075.00px;font-size:11.6px;line-height:11.6px;font-weight:400;color:#43474b;letter-spacing:0.12px;"><span style="margin:0 -0.69px">1</span>0<span style="margin:0 0.81px">-</span><span style="margin:0 -0.69px">1</span><span style="margin:0 -0.69px">1</span><span style="margin:0 0.81px">-</span>20<span style="margin:0 -0.69px">1</span>9</div>
<div class="t" style="left:144px;top:1075.00px;font-size:11.6px;line-height:11.6px;font-weight:400;color:#43474b;letter-spacing:0.12px;">472947<span style="margin:0 -0.69px">1</span>859</div>
<div class="t" style="left:361px;top:1075.00px;font-size:11.6px;line-height:11.6px;font-weight:400;color:#43474b;letter-spacing:0.13px;">BTM Ticket-E-2W-Adult-ID Passport</div>
<div class="t" style="left:596.7px;top:1075.00px;font-size:11.6px;line-height:11.6px;font-weight:400;color:#43474b;letter-spacing:0px;transform:scaleX(0.905);transform-origin:0 0;">E-VCR (PROMO INDO)</div>
<div class="t" style="left:766px;top:1075.00px;font-size:11.6px;line-height:11.6px;font-weight:400;color:#43474b;letter-spacing:-0.14px;">Rp. 270.00</div>
<div class="t" style="left:894px;top:1075.00px;font-size:11.6px;line-height:11.6px;font-weight:400;color:#43474b;letter-spacing:0.12px;"><span style="margin:0 -0.69px">1</span>0<span style="margin:0 0.81px">-</span><span style="margin:0 -0.69px">1</span><span style="margin:0 -0.69px">1</span><span style="margin:0 0.81px">-</span>20<span style="margin:0 -0.69px">1</span>9</div>
<div class="t" style="left:1012px;top:1075.00px;font-size:11.6px;line-height:11.6px;font-weight:400;color:#43474b;letter-spacing:0.12px;"><span style="margin:0 -0.69px">1</span>0</div>
<div class="t" style="left:1119px;top:1075.00px;font-size:11.6px;line-height:11.6px;font-weight:400;color:#43474b;letter-spacing:-0.16px;">IDR 5200</div>
<div class="b" style="left:1239px;top:1065.4px;width:41px;height:32px;box-sizing:border-box;border:1px solid #e1e2e4;border-radius:3px;background:#fff;box-shadow:0 1px 0 rgba(0,0,0,0.03)"></div>
<div class="b" style="left:1288px;top:1065.4px;width:42px;height:32px;box-sizing:border-box;border:1px solid #e1e2e4;border-radius:3px;background:#fff;box-shadow:0 1px 0 rgba(0,0,0,0.03)"></div>
<svg class="b" style="left:1239px;top:1065.4px" width="41" height="32" viewBox="0 0 41 32"><path d="M26.3 7.6 L9.4 16.5 L16.2 18.5 L15 23.5 L19 20.2 L22.3 23.8 Z" stroke="#858d93" stroke-width="1.25" fill="none" stroke-linejoin="round"/><path d="M26.3 7.6 L16.2 18.5" stroke="#858d93" stroke-width="1.1"/><path d="M16.2 18.5 L15 23.5 L18.6 20 Z" fill="#8a9197"/></svg>
<svg class="b" style="left:1288px;top:1065.4px" width="42" height="32" viewBox="0 0 42 32"><path d="M16.9 12.5 V9.3 H25.5 V12.5" stroke="#7a8085" stroke-width="1.15" fill="none"/><path d="M16.9 19.8 H15 A1.4 1.4 0 0 1 13.6 18.4 V13.9 A1.4 1.4 0 0 1 15 12.5 H28.1 A1.4 1.4 0 0 1 29.5 13.9 V18.4 A1.4 1.4 0 0 1 28.1 19.8 H25.5" stroke="#7a8085" stroke-width="1.15" fill="none"/><rect x="16.9" y="17.6" width="8.6" height="5.1" stroke="#7a8085" stroke-width="1.15" fill="none"/></svg>
<div class="b" style="left:13px;top:1113px;width:1342px;height:1px;background:#f0f1f2"></div>
<div class="t" style="left:28.6px;top:1136.00px;font-size:11.6px;line-height:11.6px;font-weight:400;color:#43474b;letter-spacing:0.12px;">08<span style="margin:0 0.81px">-</span>29<span style="margin:0 0.81px">-</span>20<span style="margin:0 -0.69px">1</span>9</div>
<div class="t" style="left:144px;top:1136.00px;font-size:11.6px;line-height:11.6px;font-weight:400;color:#43474b;letter-spacing:0.12px;">000947<span style="margin:0 -0.69px">1</span>850</div>
<div class="t" style="left:361px;top:1136.00px;font-size:11.6px;line-height:11.6px;font-weight:400;color:#43474b;letter-spacing:0.13px;">BTM Ticket-E-2W-Adult-ID Passport</div>
<div class="t" style="left:596.7px;top:1136.00px;font-size:11.6px;line-height:11.6px;font-weight:400;color:#43474b;letter-spacing:0px;transform:scaleX(0.905);transform-origin:0 0;">E-VCR (PROMO INDO)</div>
<div class="t" style="left:766px;top:1136.00px;font-size:11.6px;line-height:11.6px;font-weight:400;color:#43474b;letter-spacing:-0.14px;">Rp. 270.00</div>
<div class="t" style="left:894px;top:1136.00px;font-size:11.6px;line-height:11.6px;font-weight:400;color:#43474b;letter-spacing:0.12px;">08<span style="margin:0 0.81px">-</span>29<span style="margin:0 0.81px">-</span>20<span style="margin:0 -0.69px">1</span>9</div>
<div class="t" style="left:1012px;top:1136.00px;font-size:11.6px;line-height:11.6px;font-weight:400;color:#43474b;letter-spacing:0.12px;">0<span style="margin:0 -0.69px">1</span></div>
<div class="t" style="left:1119px;top:1136.00px;font-size:11.6px;line-height:11.6px;font-weight:400;color:#43474b;letter-spacing:-0.16px;">IDR 5200</div>
<div class="b" style="left:1239px;top:1126.4px;width:41px;height:32px;box-sizing:border-box;border:1px solid #e1e2e4;border-radius:3px;background:#fff;box-shadow:0 1px 0 rgba(0,0,0,0.03)"></div>
<div class="b" style="left:1288px;top:1126.4px;width:42px;height:32px;box-sizing:border-box;border:1px solid #e1e2e4;border-radius:3px;background:#fff;box-shadow:0 1px 0 rgba(0,0,0,0.03)"></div>
<svg class="b" style="left:1239px;top:1126.4px" width="41" height="32" viewBox="0 0 41 32"><path d="M26.3 7.6 L9.4 16.5 L16.2 18.5 L15 23.5 L19 20.2 L22.3 23.8 Z" stroke="#858d93" stroke-width="1.25" fill="none" stroke-linejoin="round"/><path d="M26.3 7.6 L16.2 18.5" stroke="#858d93" stroke-width="1.1"/><path d="M16.2 18.5 L15 23.5 L18.6 20 Z" fill="#8a9197"/></svg>
<svg class="b" style="left:1288px;top:1126.4px" width="42" height="32" viewBox="0 0 42 32"><path d="M16.9 12.5 V9.3 H25.5 V12.5" stroke="#7a8085" stroke-width="1.15" fill="none"/><path d="M16.9 19.8 H15 A1.4 1.4 0 0 1 13.6 18.4 V13.9 A1.4 1.4 0 0 1 15 12.5 H28.1 A1.4 1.4 0 0 1 29.5 13.9 V18.4 A1.4 1.4 0 0 1 28.1 19.8 H25.5" stroke="#7a8085" stroke-width="1.15" fill="none"/><rect x="16.9" y="17.6" width="8.6" height="5.1" stroke="#7a8085" stroke-width="1.15" fill="none"/></svg>
<div class="b" style="left:13px;top:1174px;width:1342px;height:1px;background:#f0f1f2"></div>
<div class="t" style="left:28.6px;top:1197.00px;font-size:11.6px;line-height:11.6px;font-weight:400;color:#43474b;letter-spacing:0.12px;">09<span style="margin:0 0.81px">-</span>07<span style="margin:0 0.81px">-</span>20<span style="margin:0 -0.69px">1</span>9</div>
<div class="t" style="left:144px;top:1197.00px;font-size:11.6px;line-height:11.6px;font-weight:400;color:#43474b;letter-spacing:0.12px;">472947<span style="margin:0 -0.69px">1</span>859</div>
<div class="t" style="left:361px;top:1197.00px;font-size:11.6px;line-height:11.6px;font-weight:400;color:#43474b;letter-spacing:0.13px;">BTM Ticket-E-2W-Adult-ID Passport</div>
<div class="t" style="left:596.7px;top:1197.00px;font-size:11.6px;line-height:11.6px;font-weight:400;color:#43474b;letter-spacing:0px;transform:scaleX(0.905);transform-origin:0 0;">E-VCR (PROMO INDO)</div>
<div class="t" style="left:766px;top:1197.00px;font-size:11.6px;line-height:11.6px;font-weight:400;color:#43474b;letter-spacing:-0.14px;">Rp. 270.00</div>
<div class="t" style="left:894px;top:1197.00px;font-size:11.6px;line-height:11.6px;font-weight:400;color:#43474b;letter-spacing:0.12px;">09<span style="margin:0 0.81px">-</span>07<span style="margin:0 0.81px">-</span>20<span style="margin:0 -0.69px">1</span>9</div>
<div class="t" style="left:1012px;top:1197.00px;font-size:11.6px;line-height:11.6px;font-weight:400;color:#43474b;letter-spacing:0.12px;">02</div>
<div class="t" style="left:1119px;top:1197.00px;font-size:11.6px;line-height:11.6px;font-weight:400;color:#43474b;letter-spacing:-0.16px;">IDR 5200</div>
<div class="b" style="left:1239px;top:1187.4px;width:41px;height:32px;box-sizing:border-box;border:1px solid #e1e2e4;border-radius:3px;background:#fff;box-shadow:0 1px 0 rgba(0,0,0,0.03)"></div>
<div class="b" style="left:1288px;top:1187.4px;width:42px;height:32px;box-sizing:border-box;border:1px solid #e1e2e4;border-radius:3px;background:#fff;box-shadow:0 1px 0 rgba(0,0,0,0.03)"></div>
<svg class="b" style="left:1239px;top:1187.4px" width="41" height="32" viewBox="0 0 41 32"><path d="M26.3 7.6 L9.4 16.5 L16.2 18.5 L15 23.5 L19 20.2 L22.3 23.8 Z" stroke="#858d93" stroke-width="1.25" fill="none" stroke-linejoin="round"/><path d="M26.3 7.6 L16.2 18.5" stroke="#858d93" stroke-width="1.1"/><path d="M16.2 18.5 L15 23.5 L18.6 20 Z" fill="#8a9197"/></svg>
<svg class="b" style="left:1288px;top:1187.4px" width="42" height="32" viewBox="0 0 42 32"><path d="M16.9 12.5 V9.3 H25.5 V12.5" stroke="#7a8085" stroke-width="1.15" fill="none"/><path d="M16.9 19.8 H15 A1.4 1.4 0 0 1 13.6 18.4 V13.9 A1.4 1.4 0 0 1 15 12.5 H28.1 A1.4 1.4 0 0 1 29.5 13.9 V18.4 A1.4 1.4 0 0 1 28.1 19.8 H25.5" stroke="#7a8085" stroke-width="1.15" fill="none"/><rect x="16.9" y="17.6" width="8.6" height="5.1" stroke="#7a8085" stroke-width="1.15" fill="none"/></svg>
<div class="b" style="left:13px;top:1235px;width:1342px;height:1px;background:#f0f1f2"></div>
<div class="t" style="left:28.6px;top:1258.00px;font-size:11.6px;line-height:11.6px;font-weight:400;color:#43474b;letter-spacing:0.12px;"><span style="margin:0 -0.69px">1</span>2<span style="margin:0 0.81px">-</span><span style="margin:0 -0.69px">1</span>7<span style="margin:0 0.81px">-</span>20<span style="margin:0 -0.69px">1</span>9</div>
<div class="t" style="left:144px;top:1258.00px;font-size:11.6px;line-height:11.6px;font-weight:400;color:#43474b;letter-spacing:0.12px;">000947<span style="margin:0 -0.69px">1</span>85<span style="margin:0 -0.69px">1</span></div>
<div class="t" style="left:361px;top:1258.00px;font-size:11.6px;line-height:11.6px;font-weight:400;color:#43474b;letter-spacing:0.13px;">BTM Ticket-E-2W-Adult-ID Passport</div>
<div class="t" style="left:596.7px;top:1258.00px;font-size:11.6px;line-height:11.6px;font-weight:400;color:#43474b;letter-spacing:0px;transform:scaleX(0.905);transform-origin:0 0;">E-VCR (PROMO INDO)</div>
<div class="t" style="left:766px;top:1258.00px;font-size:11.6px;line-height:11.6px;font-weight:400;color:#43474b;letter-spacing:-0.14px;">Rp. 270.00</div>
<div class="t" style="left:894px;top:1258.00px;font-size:11.6px;line-height:11.6px;font-weight:400;color:#43474b;letter-spacing:0.12px;"><span style="margin:0 -0.69px">1</span>2<span style="margin:0 0.81px">-</span><span style="margin:0 -0.69px">1</span>7<span style="margin:0 0.81px">-</span>20<span style="margin:0 -0.69px">1</span>9</div>
<div class="t" style="left:1012px;top:1258.00px;font-size:11.6px;line-height:11.6px;font-weight:400;color:#43474b;letter-spacing:0.12px;">0<span style="margin:0 -0.69px">1</span></div>
<div class="t" style="left:1119px;top:1258.00px;font-size:11.6px;line-height:11.6px;font-weight:400;color:#43474b;letter-spacing:-0.16px;">IDR 5200</div>
<div class="b" style="left:1239px;top:1248.4px;width:41px;height:32px;box-sizing:border-box;border:1px solid #e1e2e4;border-radius:3px;background:#fff;box-shadow:0 1px 0 rgba(0,0,0,0.03)"></div>
<div class="b" style="left:1288px;top:1248.4px;width:42px;height:32px;box-sizing:border-box;border:1px solid #e1e2e4;border-radius:3px;background:#fff;box-shadow:0 1px 0 rgba(0,0,0,0.03)"></div>
<svg class="b" style="left:1239px;top:1248.4px" width="41" height="32" viewBox="0 0 41 32"><path d="M26.3 7.6 L9.4 16.5 L16.2 18.5 L15 23.5 L19 20.2 L22.3 23.8 Z" stroke="#858d93" stroke-width="1.25" fill="none" stroke-linejoin="round"/><path d="M26.3 7.6 L16.2 18.5" stroke="#858d93" stroke-width="1.1"/><path d="M16.2 18.5 L15 23.5 L18.6 20 Z" fill="#8a9197"/></svg>
<svg class="b" style="left:1288px;top:1248.4px" width="42" height="32" viewBox="0 0 42 32"><path d="M16.9 12.5 V9.3 H25.5 V12.5" stroke="#7a8085" stroke-width="1.15" fill="none"/><path d="M16.9 19.8 H15 A1.4 1.4 0 0 1 13.6 18.4 V13.9 A1.4 1.4 0 0 1 15 12.5 H28.1 A1.4 1.4 0 0 1 29.5 13.9 V18.4 A1.4 1.4 0 0 1 28.1 19.8 H25.5" stroke="#7a8085" stroke-width="1.15" fill="none"/><rect x="16.9" y="17.6" width="8.6" height="5.1" stroke="#7a8085" stroke-width="1.15" fill="none"/></svg>
<div class="t" style="left:12px;top:1319.00px;font-size:10.9px;line-height:10.9px;font-weight:400;color:#797e83;letter-spacing:0.3px;">Showing 1-09 of 78</div>
<div class="b" style="left:128px;top:1314px;width:67px;height:22px;background:#f7f8fa;border-radius:4px"></div>
<div class="b" style="left:161px;top:1314px;width:1px;height:22px;background:#e6e8eb"></div>
<svg class="b" style="left:140px;top:1319px" width="9" height="12" viewBox="0 0 9 12"><path d="M6.3 2 L2.5 6 L6.3 10" stroke="#2d3034" stroke-width="1.35" fill="none" stroke-linecap="round" stroke-linejoin="round"/></svg>
<svg class="b" style="left:175px;top:1319px" width="9" height="12" viewBox="0 0 9 12"><path d="M2.5 2 L6.3 6 L2.5 10" stroke="#2d3034" stroke-width="1.35" fill="none" stroke-linecap="round" stroke-linejoin="round"/></svg>
<div class="t" style="left:13px;top:1369.00px;font-size:17.8px;line-height:17.8px;font-weight:400;color:#25282b;letter-spacing:0.06px;">Rejected Order</div>
</body></html>
